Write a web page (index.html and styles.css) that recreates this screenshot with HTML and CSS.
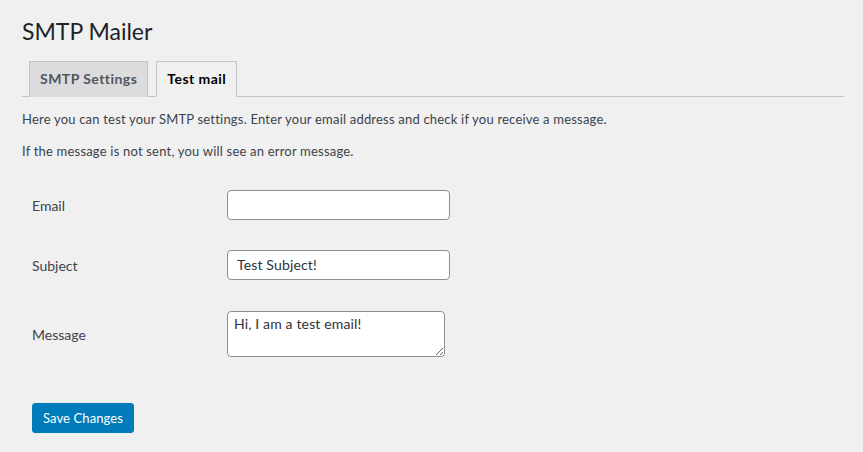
FILE: index.html
```html
<!DOCTYPE html>
<html lang="en">
<head>
<meta charset="utf-8">
<title>SMTP Mailer</title>
<link rel="stylesheet" href="styles.css">
</head>
<body>
<div class="wrap">
  <h1 class="page-title">SMTP Mailer</h1>
  <nav class="nav-tab-wrapper">
    <a class="nav-tab" href="#">SMTP Settings</a>
    <a class="nav-tab nav-tab-active" href="#">Test mail</a>
  </nav>
  <p class="intro">Here you can test your SMTP settings. Enter your email address and check if you receive a message.</p>
  <p class="intro">If the message is not sent, you will see an error message.</p>
  <form class="form-table">
    <div class="form-row">
      <label class="form-label" for="email">Email</label>
      <input class="text-input" id="email" type="text" value="">
    </div>
    <div class="form-row">
      <label class="form-label" for="subject">Subject</label>
      <input class="text-input" id="subject" type="text" value="Test Subject!">
    </div>
    <div class="form-row form-row-message">
      <label class="form-label" for="message">Message</label>
      <textarea class="text-area" id="message">Hi, I am a test email!</textarea>
    </div>
    <div class="submit-row">
      <button class="button-primary" type="button">Save Changes</button>
    </div>
  </form>
</div>
</body>
</html>
```

FILE: styles.css
```css
* { box-sizing: border-box; }

html, body {
  margin: 0;
  background: #f0f0f1;
}

body {
  font-family: Lato, "Open Sans", sans-serif;
  font-size: 13px;
  line-height: 1.5;
  color: #3c434a;
}

.wrap {
  padding: 10px 19px 0 22px;
}

.page-title {
  margin: 0;
  padding: 7px 0 4px;
  font-size: 23px;
  font-weight: 400;
  line-height: 1.3;
  color: #1d2327;
}

.nav-tab-wrapper {
  display: flex;
  padding-top: 10px;
  border-bottom: 1px solid #c3c4c7;
}

.nav-tab {
  display: block;
  margin-left: 7px;
  margin-bottom: -1px;
  padding: 5px 10px;
  border: 1px solid #c3c4c7;
  border-bottom: none;
  background: #dcdcde;
  color: #50575e;
  font-size: 14px;
  font-weight: 700;
  line-height: 24px;
  letter-spacing: 0.45px;
  text-decoration: none;
}

.nav-tab + .nav-tab {
  margin-left: 8px;
}

.nav-tab-active {
  background: #f0f0f1;
  color: #000;
  border-bottom: 1px solid #f0f0f1;
}

.intro {
  margin: 13px 0;
  letter-spacing: 0.2px;
}

.form-table {
  display: block;
  margin-top: 13px;
}

.form-row {
  display: grid;
  grid-template-columns: 205px auto;
  align-items: center;
  justify-items: start;
  padding: 15px 0;
}

.form-row-message {
  padding-top: 16px;
}

.form-label {
  padding: 2px 0 0 10px;
  font-size: 14px;
  color: #3c434a;
}

.text-input {
  width: 223px;
  height: 30px;
  margin: 0;
  padding: 0 9px;
  border: 1px solid #8c8f94;
  border-radius: 4px;
  background: #fff;
  font-family: inherit;
  font-size: 14px;
  letter-spacing: 0.15px;
  color: #2c3338;
}

.text-area {
  display: block;
  width: 218px;
  height: 46px;
  margin: 0;
  padding: 2px 6px;
  border: 1px solid #8c8f94;
  border-radius: 4px;
  background: #fff;
  font-family: inherit;
  font-size: 14px;
  line-height: 1.4;
  letter-spacing: 0.15px;
  color: #2c3338;
}

.submit-row {
  padding: 31px 0 0 10px;
}

.button-primary {
  display: block;
  height: 30px;
  padding: 0 10px;
  border: 1px solid #007cba;
  border-radius: 3px;
  background: #007cba;
  color: #fff;
  font-family: inherit;
  font-size: 13px;
  line-height: 28px;
  letter-spacing: 0.1px;
}
```
